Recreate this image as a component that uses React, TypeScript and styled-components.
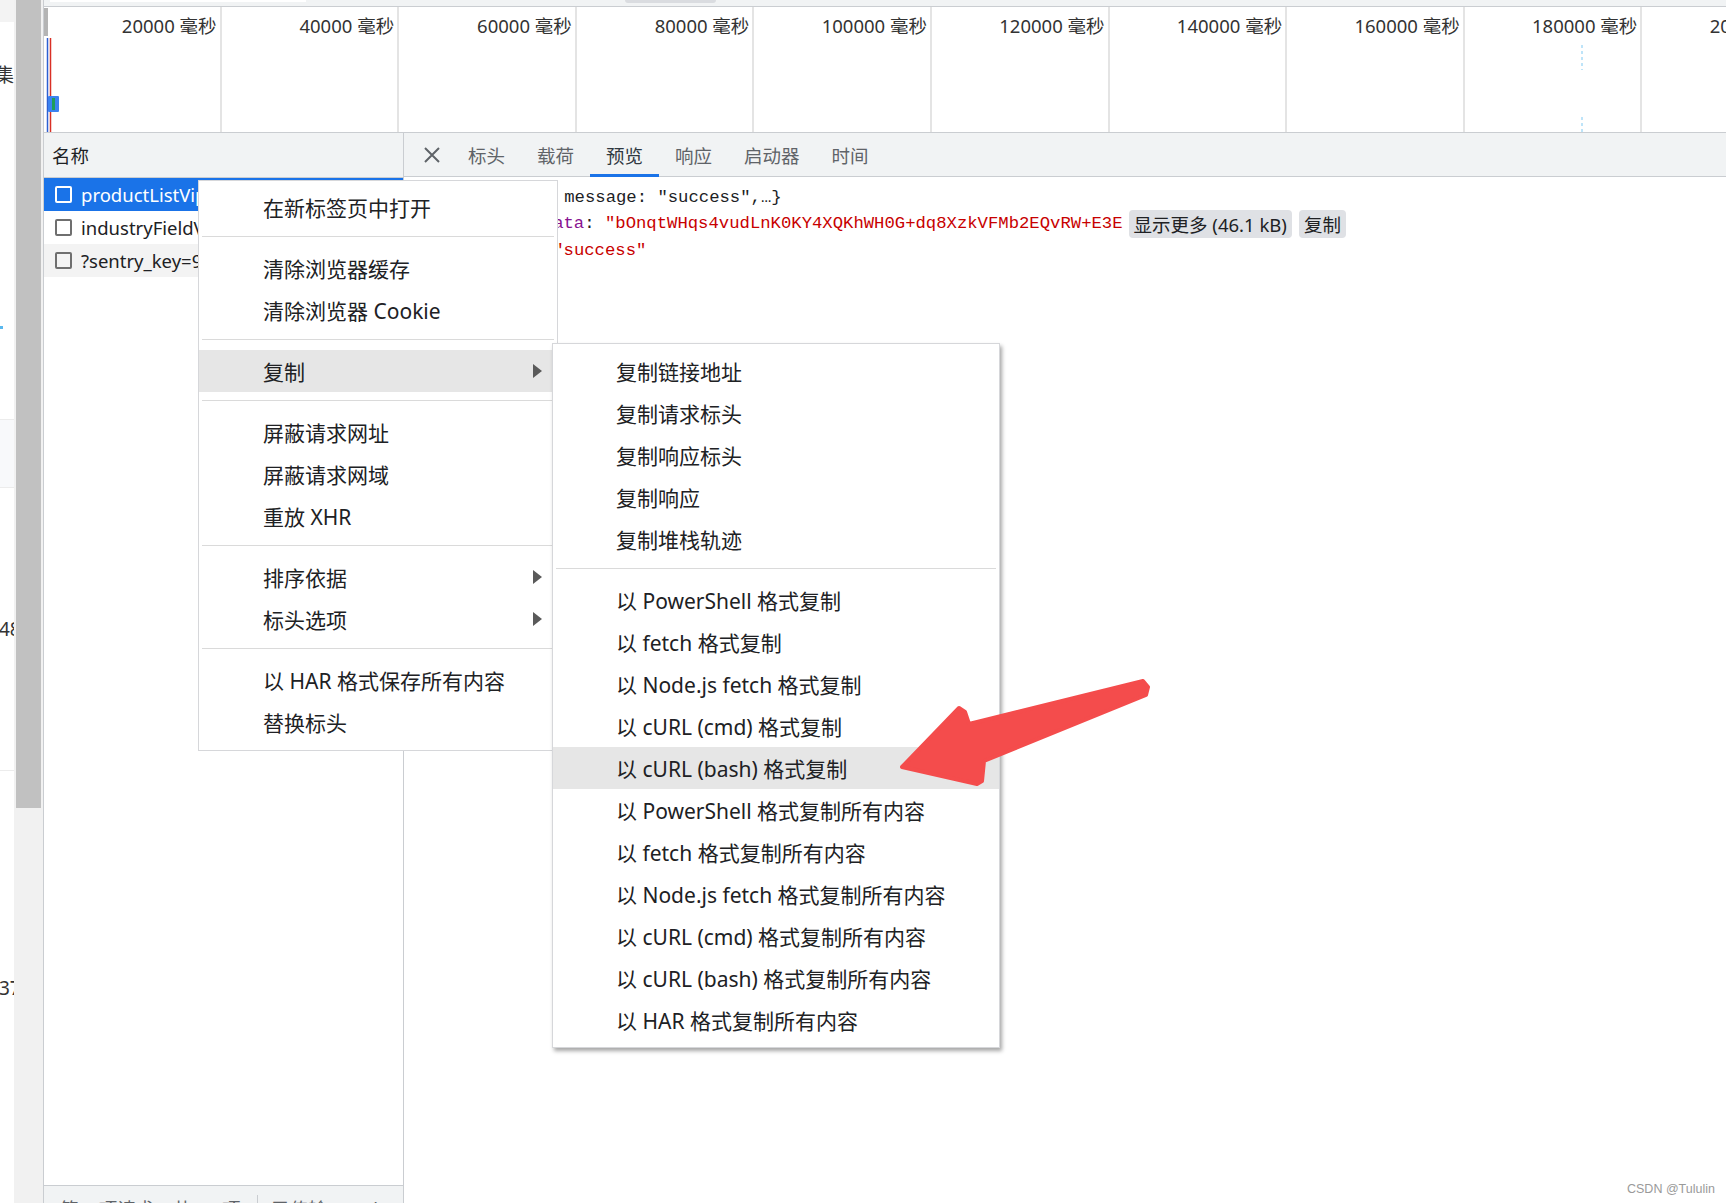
import React from "react";
import styled, { createGlobalStyle } from "styled-components";

const SANS = `"Noto Sans", "Noto Sans CJK SC", sans-serif`;
const MONO = `"Liberation Mono", "DejaVu Sans Mono", "Noto Sans CJK SC", monospace`;

const GlobalStyle = createGlobalStyle`
  html, body {
    margin: 0;
    padding: 0;
    overflow: hidden;
    background: #fff;
  }
  * {
    box-sizing: border-box;
  }
`;

const Page = styled.div`
  position: relative;
  display: flex;
  width: 1726px;
  height: 1229px;
  overflow: hidden;
  font-family: ${SANS};
  color: #202124;
`;

/* page content peeking in on the far left */
const LeftStrip = styled.div`
  width: 14px;
  flex: none;
  display: flex;
  flex-direction: column;
  overflow: hidden;
  background: #fff;
`;

const StripCap = styled.div`
  height: 22px;
  background: #f3f3f3;
`;

const StripText = styled.div<{ $gap: number; $shift: number }>`
  margin-top: ${(p) => p.$gap}px;
  margin-left: ${(p) => p.$shift}px;
  height: 24px;
  line-height: 24px;
  font-size: 19px;
  color: #333;
  white-space: nowrap;
`;

const StripMark = styled.div<{ $gap: number }>`
  margin-top: ${(p) => p.$gap}px;
  width: 3px;
  height: 3px;
  background: #5ab8ee;
`;

const StripBand = styled.div<{ $gap: number }>`
  margin-top: ${(p) => p.$gap}px;
  height: 69px;
  background: #f8f9fb;
  border-top: 1px solid #ececec;
  border-bottom: 1px solid #ececec;
`;

const StripRule = styled.div<{ $gap: number }>`
  margin-top: ${(p) => p.$gap}px;
  height: 1px;
  background: #ececec;
`;

const ScrollTrack = styled.div`
  width: 30px;
  flex: none;
  padding: 0 2px;
  background: #f1f1f1;
  border-right: 1px solid #cacdd1;
`;

const ScrollThumb = styled.div`
  height: 808px;
  background: #c1c1c1;
`;

const Main = styled.div`
  flex: 1;
  min-width: 0;
  display: flex;
  flex-direction: column;
`;

const TopStrip = styled.div`
  height: 7px;
  flex: none;
  display: flex;
  align-items: flex-start;
  background: #f1f3f4;
  border-bottom: 1px solid #cacdd1;
`;

const FilterEdge = styled.div`
  margin-left: 6px;
  width: 256px;
  height: 2px;
  background: #fff;
`;

const ButtonEdge = styled.div`
  margin-left: 319px;
  width: 91px;
  height: 3px;
  border-radius: 0 0 6px 6px;
  background: #dadce0;
`;

const Overview = styled.div`
  position: relative;
  height: 126px;
  flex: none;
  display: flex;
  overflow: hidden;
  border-bottom: 1px solid #cacdd1;
`;

const TickColumn = styled.div`
  width: 177.6px;
  flex: none;
  padding: 6px 3px 0 0;
  border-right: 2px solid #e4e4e4;
  text-align: right;
  font-size: 18.5px;
  line-height: 25px;
  color: #333;
  white-space: nowrap;
`;

const OverviewMarks = styled.svg`
  position: absolute;
  left: 0;
  top: 0;
  pointer-events: none;
`;

const Panels = styled.div`
  flex: 1;
  min-height: 0;
  display: flex;
`;

const NameColumn = styled.div`
  width: 360px;
  flex: none;
  display: flex;
  flex-direction: column;
  border-right: 1px solid #cacdd1;
`;

const ColHeader = styled.div`
  height: 45px;
  flex: none;
  display: flex;
  align-items: center;
  padding-left: 8px;
  background: #f1f3f4;
  border-bottom: 1px solid #cacdd1;
  font-size: 18.5px;
`;

const Row = styled.div<{ $selected?: boolean; $shade?: boolean }>`
  height: 33px;
  flex: none;
  display: flex;
  align-items: center;
  gap: 9px;
  padding-left: 11px;
  background: ${(p) => (p.$selected ? "#1a73e8" : p.$shade ? "#f3f3f3" : "#fff")};
  color: ${(p) => (p.$selected ? "#fff" : "#202124")};
  font-size: 18.5px;
  overflow: hidden;
`;

const Checkbox = styled.span<{ $light?: boolean }>`
  width: 17px;
  height: 17px;
  flex: none;
  border: 2px solid ${(p) => (p.$light ? "#fff" : "#6f6f6f")};
  border-radius: 2px;
`;

const RowName = styled.span`
  white-space: nowrap;
  overflow: hidden;
`;

const Spacer = styled.div`
  flex: 1;
`;

const StatusBar = styled.div`
  height: 44px;
  flex: none;
  display: flex;
  align-items: center;
  padding-left: 16px;
  background: #f1f3f4;
  border-top: 1px solid #cacdd1;
  font-size: 18.5px;
  color: #5f6368;
  white-space: nowrap;
`;

const StatusSep = styled.span`
  width: 1px;
  height: 26px;
  margin: 0 14px 0 16px;
  background: #cacdd1;
`;

const Detail = styled.div`
  flex: 1;
  min-width: 0;
  display: flex;
  flex-direction: column;
`;

const Tabs = styled.div`
  height: 44px;
  flex: none;
  display: flex;
  align-items: stretch;
  padding-left: 12px;
  background: #f1f3f4;
  border-bottom: 1px solid #cacdd1;
`;

const CloseButton = styled.div`
  width: 32px;
  margin-right: 4px;
  display: flex;
  align-items: center;
  justify-content: center;
`;

const Tab = styled.div<{ $active?: boolean }>`
  display: flex;
  align-items: center;
  padding: 3px 16px 0;
  margin-bottom: -1px;
  border-bottom: 3px solid ${(p) => (p.$active ? "#1a73e8" : "transparent")};
  font-size: 18.5px;
  color: ${(p) => (p.$active ? "#303942" : "#5f6368")};
`;

const PreviewBody = styled.div`
  padding-top: 7px;
  font-family: ${MONO};
  font-size: 17.25px;
`;

const CodeLine = styled.div<{ $indent: number }>`
  height: 26.5px;
  display: flex;
  align-items: center;
  padding-left: ${(p) => p.$indent}px;
  white-space: pre;
  color: #202124;
`;

const Key = styled.span`
  color: #881391;
`;

const Str = styled.span`
  color: #c80000;
`;

const InlineButton = styled.span<{ $gap: number }>`
  height: 28px;
  display: inline-flex;
  align-items: center;
  margin-left: ${(p) => p.$gap}px;
  padding: 0 5px;
  border-radius: 4px;
  background: #dfe1e5;
  font-family: ${SANS};
  font-size: 18.5px;
  color: #202124;
`;

/* context menus */
const Menu = styled.div<{ $left: number; $top: number; $width: number; $raised?: boolean }>`
  position: absolute;
  left: ${(p) => p.$left}px;
  top: ${(p) => p.$top}px;
  width: ${(p) => p.$width}px;
  padding: ${(p) => (p.$raised ? "6px 0 6px" : "5px 0 7px")};
  background: #fff;
  border: 1px solid #d6d7da;
  box-shadow: ${(p) => (p.$raised ? "2px 3px 4px rgba(0, 0, 0, 0.35)" : "none")};
  font-family: ${SANS};
`;

const MenuItem = styled.div<{ $pad: number; $active?: boolean }>`
  height: 42px;
  display: flex;
  align-items: center;
  padding: 0 15px 0 ${(p) => p.$pad}px;
  background: ${(p) => (p.$active ? "#e6e6e6" : "transparent")};
  font-size: 21px;
  color: #202124;
  white-space: pre;
`;

const SubArrow = styled.span`
  margin-left: auto;
  width: 0;
  height: 0;
  border-left: 9px solid #5a5a5a;
  border-top: 7px solid transparent;
  border-bottom: 7px solid transparent;
`;

const MenuSep = styled.div`
  height: 1px;
  margin: 8px 3px 10px;
  background: #dadada;
`;

const Annotation = styled.svg`
  position: absolute;
  left: 0;
  top: 0;
  pointer-events: none;
`;

const Watermark = styled.div`
  position: absolute;
  left: 1627px;
  top: 1181px;
  font-family: "Liberation Sans", Arial, sans-serif;
  font-size: 12.5px;
  line-height: 16px;
  color: #9a9a9a;
`;

type Entry = { label: string; sub?: boolean; active?: boolean };

const mainMenu: Entry[][] = [
  [{ label: "在新标签页中打开" }],
  [{ label: "清除浏览器缓存" }, { label: "清除浏览器 Cookie" }],
  [{ label: "复制", sub: true, active: true }],
  [{ label: "屏蔽请求网址" }, { label: "屏蔽请求网域" }, { label: "重放 XHR" }],
  [
    { label: "排序依据", sub: true },
    { label: "标头选项", sub: true },
  ],
  [{ label: "以 HAR 格式保存所有内容" }, { label: "替换标头" }],
];

const copyMenu: Entry[][] = [
  [
    { label: "复制链接地址" },
    { label: "复制请求标头" },
    { label: "复制响应标头" },
    { label: "复制响应" },
    { label: "复制堆栈轨迹" },
  ],
  [
    { label: "以 PowerShell 格式复制" },
    { label: "以 fetch 格式复制" },
    { label: "以 Node.js fetch 格式复制" },
    { label: "以 cURL (cmd) 格式复制" },
    { label: "以 cURL (bash) 格式复制", active: true },
    { label: "以 PowerShell 格式复制所有内容" },
    { label: "以 fetch 格式复制所有内容" },
    { label: "以 Node.js fetch 格式复制所有内容" },
    { label: "以 cURL (cmd) 格式复制所有内容" },
    { label: "以 cURL (bash) 格式复制所有内容" },
    { label: "以 HAR 格式复制所有内容" },
  ],
];

const ticks = [20000, 40000, 60000, 80000, 100000, 120000, 140000, 160000, 180000, 200000];

const tabs = ["标头", "载荷", "预览", "响应", "启动器", "时间"];

const MenuGroups: React.FC<{ groups: Entry[][]; pad: number }> = ({ groups, pad }) => (
  <>
    {groups.map((group, gi) => (
      <React.Fragment key={gi}>
        {gi > 0 && <MenuSep />}
        {group.map((item) => (
          <MenuItem key={item.label} $pad={pad} $active={item.active}>
            {item.label}
            {item.sub && <SubArrow />}
          </MenuItem>
        ))}
      </React.Fragment>
    ))}
  </>
);

const App: React.FC = () => {
  return (
    <Page>
      <GlobalStyle />
      <LeftStrip>
        <StripCap />
        <StripText $gap={41} $shift={-5}>
          集
        </StripText>
        <StripMark $gap={239} />
        <StripBand $gap={90} />
        <StripText $gap={129} $shift={-1}>
          48
        </StripText>
        <StripRule $gap={129} />
        <StripText $gap={205} $shift={-1}>
          37
        </StripText>
      </LeftStrip>

      <ScrollTrack>
        <ScrollThumb />
      </ScrollTrack>

      <Main>
        <TopStrip>
          <FilterEdge />
          <ButtonEdge />
        </TopStrip>

        <Overview>
          {ticks.map((t) => (
            <TickColumn key={t}>{t} 毫秒</TickColumn>
          ))}
          <OverviewMarks width="1682" height="126">
            <rect x="0" y="1" width="4" height="28" fill="#b4b4b4" />
            <line x1="3.5" y1="31" x2="3.5" y2="126" stroke="#2d5fd1" strokeWidth="1.5" />
            <line x1="6.5" y1="31" x2="6.5" y2="126" stroke="#d93025" strokeWidth="1.5" />
            <rect x="4" y="89" width="11" height="16" rx="1" fill="#3b82f0" />
            <rect x="8" y="91" width="3" height="12" fill="#1e9e5a" />
            <line x1="1538" y1="38" x2="1538" y2="63" stroke="#a9dcf7" strokeWidth="1.5" strokeDasharray="3 3" />
            <line x1="1538" y1="110" x2="1538" y2="125" stroke="#a9dcf7" strokeWidth="1.5" strokeDasharray="3 3" />
          </OverviewMarks>
        </Overview>

        <Panels>
          <NameColumn>
            <ColHeader>名称</ColHeader>
            <Row $selected>
              <Checkbox $light />
              <RowName>productListVip?pageNum=1</RowName>
            </Row>
            <Row>
              <Checkbox />
              <RowName>industryFieldVo</RowName>
            </Row>
            <Row $shade>
              <Checkbox />
              <RowName>?sentry_key=9e2c1f</RowName>
            </Row>
            <Spacer />
            <StatusBar>
              第 3 项请求，共 61 项
              <StatusSep />
              已传输 30.0 kB
            </StatusBar>
          </NameColumn>

          <Detail>
            <Tabs>
              <CloseButton>
                <svg width="16" height="16" viewBox="0 0 16 16">
                  <path d="M1 1 15 15M15 1 1 15" stroke="#5f6368" strokeWidth="2" fill="none" />
                </svg>
              </CloseButton>
              {tabs.map((t) => (
                <Tab key={t} $active={t === "预览"}>
                  {t}
                </Tab>
              ))}
            </Tabs>
            <PreviewBody>
              <CodeLine $indent={36}>{'{code: 200, message: "success",…}'}</CodeLine>
              <CodeLine $indent={56}>
                <Key>responseData</Key>
                {": "}
                <Str>"bOnqtWHqs4vudLnK0KY4XQKhWH0G+dq8XzkVFMb2EQvRW+E3E</Str>
                <InlineButton $gap={6}>显示更多 (46.1 kB)</InlineButton>
                <InlineButton $gap={7}>复制</InlineButton>
              </CodeLine>
              <CodeLine $indent={56}>
                <Key>message</Key>
                {": "}
                <Str>"success"</Str>
              </CodeLine>
            </PreviewBody>
          </Detail>
        </Panels>
      </Main>

      <Menu $left={198} $top={180} $width={360}>
        <MenuGroups groups={mainMenu} pad={64} />
      </Menu>

      <Menu $left={552} $top={343} $width={448} $raised>
        <MenuGroups groups={copyMenu} pad={63} />
      </Menu>

      <Annotation width="1726" height="1229">
        <polygon
          points="902,767 959,708 965,712 969,724 1143,681 1148,687 1146,695 984,761 982,781 977,784"
          fill="#f44c4c"
          stroke="#f44c4c"
          strokeWidth="4"
          strokeLinejoin="round"
        />
      </Annotation>

      <Watermark>CSDN @Tululin</Watermark>
    </Page>
  );
};

export default App;
